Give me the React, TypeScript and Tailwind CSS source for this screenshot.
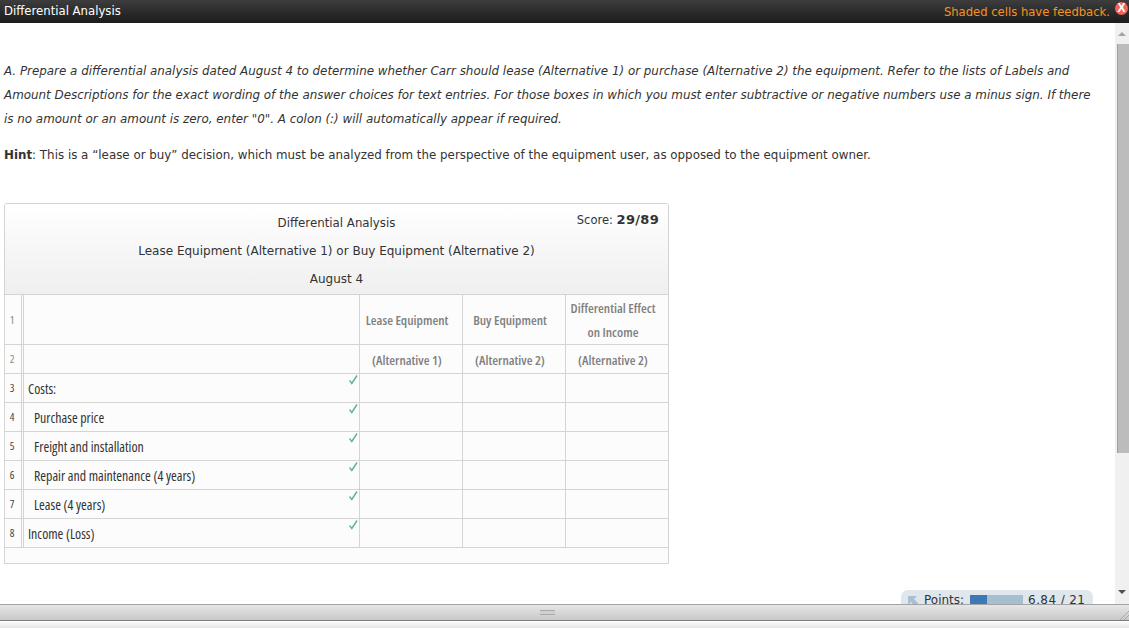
const narrow = "font-['Open_Sans',sans-serif] font-stretch-[75%] text-[13.9px]";
const narrowHead = "font-['Open_Sans',sans-serif] font-stretch-[75%] text-[13.3px]";

const rows = [
  { n: '3', label: 'Costs:', indent: false },
  { n: '4', label: 'Purchase price', indent: true },
  { n: '5', label: 'Freight and installation', indent: true },
  { n: '6', label: 'Repair and maintenance (4 years)', indent: true },
  { n: '7', label: 'Lease (4 years)', indent: true },
  { n: '8', label: 'Income (Loss)', indent: false },
];

function Check() {
  return (
    <svg width="9" height="10" viewBox="0 0 9 10" className="absolute right-[1px] top-[1px]">
      <path d="M0.5 5.5 L2.8 8.5 L8 0.5" fill="none" stroke="#5fb58f" strokeWidth="1.5" />
    </svg>
  );
}

function NumCell({ n, light }: { n: string; light?: boolean }) {
  return (
    <div className={`flex w-[19px] shrink-0 items-center justify-center border-r-[3px] border-double border-[#d4d4d4] pr-[2px] pt-[1px] ${narrow} ${light ? 'text-[#888]' : 'text-[#444]'}`}>
      <span className="text-[11px]">{n}</span>
    </div>
  );
}

function HeadCell({ children }: { children: React.ReactNode }) {
  return (
    <div className={`flex w-[103px] shrink-0 flex-col items-center justify-center border-l border-[#d4d4d4] pr-[8px] pt-[1px] ${narrowHead} font-semibold leading-[24px] text-[#808080]`}>
      {children}
    </div>
  );
}

function EmptyCell() {
  return <div className="w-[103px] shrink-0 border-l border-[#d4d4d4]" />;
}

export default function App() {
  return (
    <div className="flex h-[628px] w-[1129px] flex-col overflow-hidden bg-white font-['DejaVu_Sans',sans-serif] text-[12px] text-[#333]">
      <div className="flex h-[23px] shrink-0 items-center justify-between bg-gradient-to-b from-[#3d3d3d] to-[#1c1c1c] pl-[4px]">
        <span className="relative text-[11.7px] font-medium text-white">Differential Analysis</span>
        <div className="flex items-center">
          <span className="relative top-[1px] text-[11.6px] text-[#f7941e]">Shaded cells have feedback.</span>
          <span className="relative top-[-3px] ml-[5px] mr-[1px] flex h-[13px] w-[13px] items-center justify-center rounded-full bg-[#f0645a] font-['Liberation_Sans',sans-serif] text-[12px] font-bold leading-none text-white">
            X
          </span>
        </div>
      </div>

      <div className="flex min-h-0 flex-1">
        <div className="w-[1115px] shrink-0 overflow-hidden pl-[4px] pt-[36px]">
          <p className="w-[1095px] text-[11.9px] italic leading-[24px]">
            A. Prepare a differential analysis dated August 4 to determine whether Carr should lease (Alternative 1) or purchase (Alternative 2) the equipment. Refer to the lists of Labels and Amount Descriptions for the exact wording of the answer choices for text entries. For those boxes in which you must enter subtractive or negative numbers use a minus sign. If there is no amount or an amount is zero, enter "0". A colon (:) will automatically appear if required.
          </p>
          <p className="mt-[12px] text-[11.86px] leading-[24px]">
            <b>Hint</b>: This is a “lease or buy” decision, which must be analyzed from the perspective of the equipment user, as opposed to the equipment owner.
          </p>

          <div className="mt-[36px] w-[665px] overflow-hidden rounded-t-[3px] border border-[#d4d4d4] bg-[#fcfcfc]">
            <div className="relative flex h-[90px] flex-col items-center bg-gradient-to-b from-white to-[#efefef] pt-[5px] text-[12px] leading-[28px] text-[#333]">
              <span className="absolute right-[9px] top-[6px] text-[11.5px] leading-[20px]">
                Score: <b className="text-[13px] tracking-[0.3px]">29/89</b>
              </span>
              <div className="text-[11.8px]">Differential Analysis</div>
              <div>Lease Equipment (Alternative 1) or Buy Equipment (Alternative 2)</div>
              <div>August 4</div>
            </div>

            <div className="flex h-[50px] border-t border-[#d4d4d4]">
              <NumCell n="1" light />
              <div className="flex-1" />
              <HeadCell>Lease Equipment</HeadCell>
              <HeadCell>Buy Equipment</HeadCell>
              <HeadCell>
                <span>Differential Effect</span>
                <span>on Income</span>
              </HeadCell>
            </div>
            <div className="flex h-[29px] border-t border-[#d4d4d4]">
              <NumCell n="2" light />
              <div className="flex-1" />
              <HeadCell>(Alternative 1)</HeadCell>
              <HeadCell>(Alternative 2)</HeadCell>
              <HeadCell>(Alternative 2)</HeadCell>
            </div>

            {rows.map(r => (
              <div key={r.n} className="flex h-[29px] border-t border-[#d4d4d4]">
                <NumCell n={r.n} />
                <div className={`relative flex flex-1 items-center pt-[2px] ${narrow} text-[#333] ${r.indent ? 'pl-[10px]' : 'pl-[4px]'}`}>
                  {r.label}
                  <Check />
                </div>
                <EmptyCell />
                <EmptyCell />
                <EmptyCell />
              </div>
            ))}
            <div className="h-[16px] border-t border-[#d4d4d4]" />
          </div>

          <div className="mt-[26px] flex justify-end pr-[22px]">
            <div className="flex h-[20px] w-[192px] items-start rounded-t-[7px] bg-[#dfe6ec] pl-[6px] pt-[3px] text-[12px] leading-[14px]">
              <svg width="12" height="12" viewBox="0 0 12 12" className="mr-[5px] mt-[2px] shrink-0">
                <path d="M1 1 H10 L7 4 L11 8 V12 H8 L4 7 L1 10 Z" fill="#a8c0d2" />
              </svg>
              <span>Points:</span>
              <span className="ml-[6px] mt-[2px] flex h-[9px] w-[53px] bg-[#a6bfd0]">
                <span className="w-[17px] bg-[#3b78b5]" />
              </span>
              <span className="ml-[5px] tracking-[0.4px]">6.84 / 21</span>
            </div>
          </div>
        </div>

        <div className="flex w-[14px] shrink-0 flex-col items-end bg-[#f0f0f0]">
          <div className="flex h-[21px] w-full items-center justify-center pt-[1px]">
            <div className="h-0 w-0 border-x-[4px] border-b-[4px] border-x-transparent border-b-[#a3a3a3]" />
          </div>
          <div className="h-[409px] w-[12px] border-l border-[#a0a0a0] bg-[#bcbcbc]" />
          <div className="flex-1" />
          <div className="flex h-[21px] w-full items-center justify-center pb-[4px]">
            <div className="h-0 w-0 border-x-[4px] border-t-[4px] border-x-transparent border-t-[#505050]" />
          </div>
        </div>
      </div>

      <div className="relative flex h-[17px] shrink-0 items-center justify-center border-y border-t-[#a3a3a3] border-b-[#7d7d7d] bg-gradient-to-b from-[#e6e6e6] to-[#c9c9c9] pr-[34px]">
        <div className="h-[5px] w-[15px] border-y border-[#a9a9a9] bg-[#d0d0d0]" />
        <svg width="10" height="10" viewBox="0 0 10 10" className="absolute bottom-0 right-0">
          <path d="M1 10 L10 1 M5 10 L10 5" stroke="#a8a8a8" strokeWidth="1" />
        </svg>
      </div>
      <div className="h-[7px] shrink-0 bg-gradient-to-b from-white to-[#e4e4e4]" />
    </div>
  );
}
